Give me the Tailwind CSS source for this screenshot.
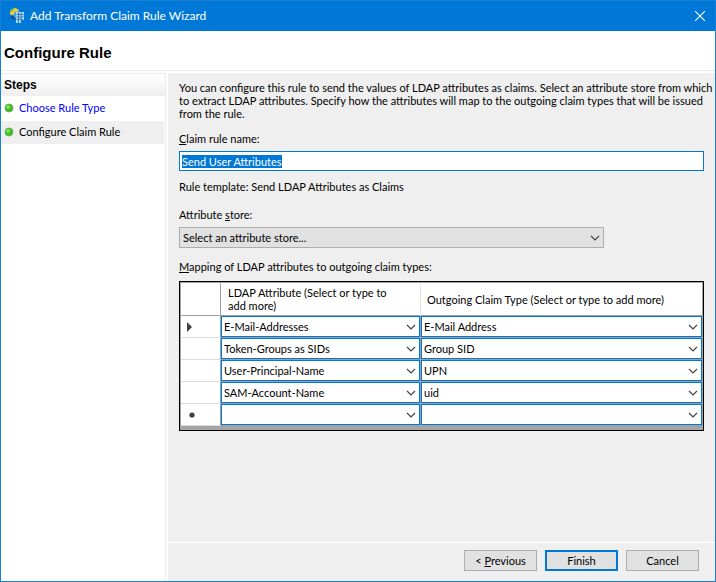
<!DOCTYPE html>
<html lang="en">
  <head>
    <meta charset="utf-8" />
    <meta content="width=device-width, initial-scale=1" name="viewport" />
    <title>Add Transform Claim Rule Wizard</title>
    <script src="https://cdn.jsdelivr.net/npm/@tailwindcss/browser@4"></script>
  </head>
  <body class="font-[Lato,'Liberation_Sans',sans-serif] text-[11px] leading-[13px] text-black">
    <svg class="hidden">
      <symbol id="chevron" viewBox="0 0 10 6">
        <path d="M1 1l4 4 4-4" fill="none" stroke="#444" stroke-width="1.2" />
      </symbol>
      <symbol id="done" viewBox="0 0 10 10">
        <circle cx="5" cy="5" r="4" fill="#3fbf22" stroke="#6aa860" stroke-width=".8" />
        <circle cx="4" cy="4" r="1.8" fill="#8be668" />
      </symbol>
    </svg>

    <div class="min-h-screen flex flex-col border border-[#1a80d6] bg-white">
      <!-- Title bar -->
      <header class="h-[30px] flex items-center bg-[#0078d7] pl-2 pr-[7px] text-white">
        <svg class="h-4 w-4" viewBox="0 0 16 16">
          <circle cx="6" cy="5.500" r="5" fill="#3fa0dc" />
          <path d="M1 4C2 1 4 0 7 .3L10 2 8 4 6 3.500 5 6 2.500 7 1 6z" fill="#f3cf3a" />
          <path d="M1 4c.5-2 2-3.500 4-3.700L4.500 2.500 2.500 4z" fill="#7cbf4e" />
          <path d="M1.500 7l3 1 2 3-2 .5C3 10.500 1.500 9 1.500 7z" fill="#12498f" />
          <path d="M7 4h8v8h-3v3H7z" fill="#a9d3f3" />
          <path d="M7.500 6.500h7M7.500 9h7M7.500 11.500h6M9.500 4.500V15M12 4.500V12" stroke="#2a78bd" stroke-width=".9" />
        </svg>
        <span class="ml-[5px] flex-1 text-[12px] leading-4">Add Transform Claim Rule Wizard</span>
        <button aria-label="Close" class="flex h-4 w-4 items-center justify-center">
          <svg class="h-[10px] w-[10px]" viewBox="0 0 10 10"><path d="M0 0l10 10M10 0L0 10" stroke="#fff" stroke-width="1.100" /></svg>
        </button>
      </header>

      <h1 class="flex h-10 items-center border-b border-[#ebebeb] pl-[3px] pt-[3px] font-['Liberation_Sans',Arial,sans-serif] text-[15px] font-bold">Configure Rule</h1>

      <div class="mt-[2px] flex flex-1">
        <!-- Steps -->
        <nav class="w-[165px] shrink-0 border-r border-t border-[#ebebeb]">
          <h2 class="flex h-[22px] items-center bg-linear-to-b from-white to-[#efefef] pl-[3px] font-['Liberation_Sans',Arial,sans-serif] text-[12px] font-bold">Steps</h2>
          <a href="#" class="flex h-[25px] items-center gap-[5px] pb-[2px] pl-[3px] text-[#0000ff]">
            <svg class="h-[10px] w-[10px]"><use href="#done" /></svg>Choose Rule Type
          </a>
          <div class="mr-px flex h-[23px] items-center gap-[5px] bg-[#efefef] pb-[2px] pl-[3px]">
            <svg class="h-[10px] w-[10px]"><use href="#done" /></svg>Configure Claim Rule
          </div>
        </nav>

        <main class="ml-[2px] flex min-w-0 flex-1 flex-col bg-[#efefef]">
          <form class="flex-1 pl-[11px] pr-[11px] pt-2">
            <p class="whitespace-nowrap">
              You can configure this rule to send the values of LDAP attributes as claims. Select an attribute store from which<br />
              to extract LDAP attributes. Specify how the attributes will map to the outgoing claim types that will be issued<br />
              from the rule.
            </p>

            <label for="ruleName" class="mt-3 block"><u>C</u>laim rule name:</label>
            <input id="ruleName" type="text" value="Send User Attributes" autofocus class="mt-[6px] block h-5 w-full border border-[#0078d7] bg-white px-[2px] outline-none selection:bg-[#0078d7] selection:text-white" />

            <p class="mt-[9px]">Rule template: Send LDAP Attributes as Claims</p>

            <label for="store" class="mt-[15px] block">Attribute <u>s</u>tore:</label>
            <div class="relative mt-[6px] mr-[100px]">
              <select id="store" class="block h-[21px] w-full appearance-none border border-[#adadad] bg-[#e1e1e1] px-[3px]">
                <option>Select an attribute store...</option>
              </select>
              <svg class="pointer-events-none absolute right-1 top-2 h-[6px] w-[10px]"><use href="#chevron" /></svg>
            </div>

            <p id="mappingLabel" class="mt-3"><u>M</u>apping of LDAP attributes to outgoing claim types:</p>
            <div class="mt-2 border border-black bg-[#a5a5a5] pb-1 pl-px pt-px">
              <table aria-labelledby="mappingLabel" class="w-full table-fixed border-separate border-spacing-0 bg-white text-left">
                <thead>
                  <tr class="h-[33px]">
                    <th class="w-10 border-b border-r border-[#a0a0a0] p-0"></th>
                    <th class="w-[200px] border-b border-r border-b-[#a0a0a0] border-r-[#e5e5e5] py-0 pl-[7px] pr-5 font-normal">LDAP Attribute (Select or type to add more)</th>
                    <th class="border-b border-r border-[#a0a0a0] py-0 pl-[6px] font-normal">Outgoing Claim Type (Select or type to add more)</th>
                  </tr>
                </thead>
                <tbody id="rows"></tbody>
              </table>
            </div>
          </form>

          <footer class="flex h-[39px] justify-end gap-2 border-t border-white pr-4 pt-[7px]">
            <button class="h-[21px] w-[73px] border border-[#adadad] bg-[#e1e1e1]">&lt; <u>P</u>revious</button>
            <button class="h-[21px] w-[73px] border-2 border-[#0078d7] bg-[#e1e1e1]">Finish</button>
            <button class="h-[21px] w-[73px] border border-[#adadad] bg-[#e1e1e1]">Cancel</button>
          </footer>
        </main>
      </div>
    </div>

    <script>
      const mappings = [
        ["E-Mail-Addresses", "E-Mail Address"],
        ["Token-Groups as SIDs", "Group SID"],
        ["User-Principal-Name", "UPN"],
        ["SAM-Account-Name", "uid"],
        ["", ""],
      ];

      function cell(value, label) {
        return `<td class="border-b border-r border-[#a0a0a0] p-0">
          <div class="relative">
            <select aria-label="${label}" class="block h-[21px] w-full appearance-none border border-[#0078d7] bg-white px-[2px]"><option>${value}</option></select>
            <svg class="pointer-events-none absolute right-1 top-2 h-[6px] w-[10px]"><use href="#chevron" /></svg>
          </div>
        </td>`;
      }

      function marker(i) {
        if (i === 0) return '<svg class="ml-[6px] h-[10px] w-[6px]" viewBox="0 0 6 10"><path d="M0 0l5 5-5 5z" fill="#404040" /></svg>';
        if (i === mappings.length - 1) return '<svg class="ml-[8px] h-[6px] w-[6px]" viewBox="0 0 6 6"><circle cx="3" cy="3" r="2.600" fill="#404040" /></svg>';
        return "";
      }

      document.getElementById("rows").innerHTML = mappings
        .map((m, i) => `<tr class="h-[22px]">
          <td class="border-b border-r border-b-[#dcdcdc] border-r-[#a0a0a0] p-0">${marker(i)}</td>
          ${cell(m[0], "LDAP Attribute")}${cell(m[1], "Outgoing Claim Type")}
        </tr>`)
        .join("");

      const ruleName = document.getElementById("ruleName");
      ruleName.focus();
      ruleName.select();
    </script>
  </body>
</html>
